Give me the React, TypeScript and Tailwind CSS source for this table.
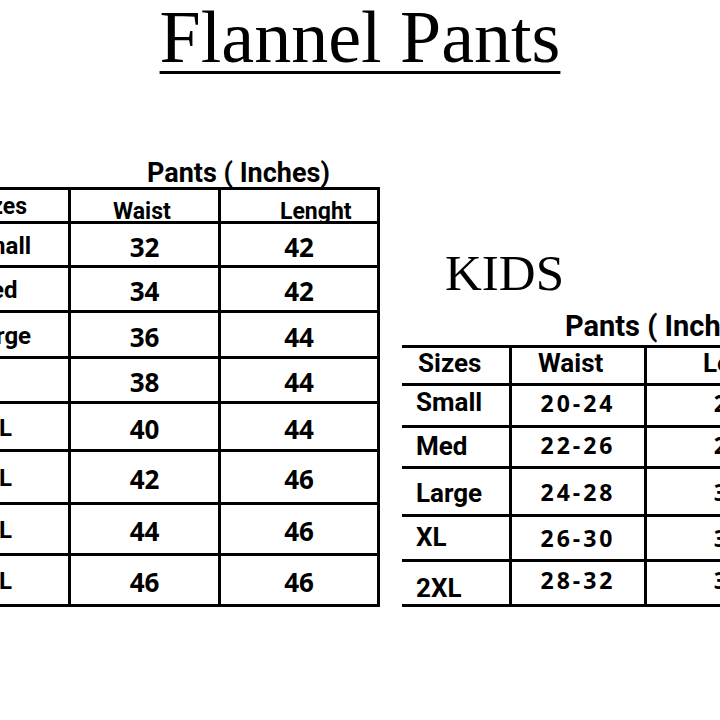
import React from 'react';

type Row = {
  size: string;
  waist: string;
  length: string;
  h: string;
  label?: string;
  num?: string;
};

const adultRows: Row[] = [
  { size: 'Small', waist: '32', length: '42', h: 'h-[44px]' },
  { size: 'Med', waist: '34', length: '42', h: 'h-[45px]' },
  { size: 'Large', waist: '36', length: '44', h: 'h-[46px]' },
  { size: 'XL', waist: '38', length: '44', h: 'h-[45px]' },
  { size: '2XL', waist: '40', length: '44', h: 'h-[48px]' },
  { size: '3XL', waist: '42', length: '46', h: 'h-[53px]' },
  { size: '4XL', waist: '44', length: '46', h: 'h-[51px]' },
  { size: '5XL', waist: '46', length: '46', h: 'h-[51px]' },
];

const kidsRows: Row[] = [
  { size: 'Small', waist: '20-24', length: '26', h: 'h-[42px]', label: 'pb-[8px]', num: 'pb-[4px]' },
  { size: 'Med', waist: '22-26', length: '28', h: 'h-[41px]', label: 'pb-[3px]', num: 'pb-[3px]' },
  { size: 'Large', waist: '24-28', length: '30', h: 'h-[48px]', label: 'pt-[2px]', num: 'pt-[2px]' },
  { size: 'XL', waist: '26-30', length: '32', h: 'h-[45px]', label: 'pb-[2px]', num: '' },
  { size: '2XL', waist: '28-32', length: '34', h: 'h-[45px]', label: 'pt-[10px]', num: 'pb-[6px]' },
];

const head = "font-['Roboto',sans-serif] font-bold";
const digits = "font-['Open_Sans',sans-serif] font-bold leading-none";

const AdultTable = () => (
  <section className="shrink-0 ml-[-51px] mt-[82px]">
    <div className={`${head} pl-[198px] text-[27px] leading-[27px]`}>Pants ( Inches)</div>
    <div className="border-t-[3px] border-black">
      <div className={`${head} flex h-[34px] border-b-[3px] border-black text-[23px] leading-[18px]`}>
        <div className="flex w-[122px] items-end border-r-[3px] border-black pb-[5px] pl-[22px]">Sizes</div>
        <div className="flex w-[150px] items-end border-r-[3px] border-black pl-[42px]">Waist</div>
        <div className="flex w-[159px] items-end border-r-[3px] border-black pl-[59px]">Lenght</div>
      </div>
      {adultRows.map((r) => (
        <div key={r.size} className={`flex ${r.h} border-b-[3px] border-black`}>
          <div className={`${head} flex w-[122px] items-center border-r-[3px] border-black pl-[21px] pt-[2px] text-[24px] leading-none`}>
            {r.size}
          </div>
          <div className={`${digits} flex w-[150px] items-center justify-center border-r-[3px] border-black pt-[4px] text-[26px]`}>
            {r.waist}
          </div>
          <div className={`${digits} flex w-[159px] items-center justify-center border-r-[3px] border-black pt-[4px] text-[26px]`}>
            {r.length}
          </div>
        </div>
      ))}
    </div>
  </section>
);

const KidsTable = () => (
  <section className="shrink-0 ml-[22px] mt-[170px]">
    <div className="pl-[43px] font-['Liberation_Serif',serif] text-[51px] leading-none">KIDS</div>
    <div className={`${head} mt-[12px] mb-[3px] whitespace-nowrap pl-[163px] text-[29px] leading-[31px]`}>Pants ( Inches)</div>
    <div className="border-t-[3px] border-black">
      <div className={`${head} flex h-[38px] border-b-[3px] border-black text-[26px] leading-[20px]`}>
        <div className="flex w-[110px] items-end border-r-[3px] border-black pb-[10px] pl-[16px]">Sizes</div>
        <div className="flex w-[135px] items-end border-r-[3px] border-black pb-[10px] pl-[26px]">Waist</div>
        <div className="flex w-[160px] items-end pb-[10px] pl-[56px]">Lenght</div>
      </div>
      {kidsRows.map((r) => (
        <div key={r.size} className={`flex ${r.h} border-b-[3px] border-black`}>
          <div className={`${head} flex w-[110px] items-center border-r-[3px] border-black pl-[14px] text-[26px] leading-none ${r.label}`}>
            {r.size}
          </div>
          <div className={`${digits} flex w-[135px] items-center justify-center border-r-[3px] border-black text-[23px] tracking-[3px] ${r.num}`}>
            {r.waist}
          </div>
          <div className={`${digits} flex w-[160px] items-center justify-center text-[23px] ${r.num}`}>
            {r.length}
          </div>
        </div>
      ))}
    </div>
  </section>
);

export default function App() {
  return (
    <div className="h-[720px] w-[720px] overflow-hidden bg-white text-black">
      <h1 className="mt-[-4px] text-center font-['Liberation_Serif',serif] text-[74px] leading-[82px] underline decoration-[3px] underline-offset-[9px]">
        Flannel Pants
      </h1>
      <div className="flex items-start">
        <AdultTable />
        <KidsTable />
      </div>
    </div>
  );
}
